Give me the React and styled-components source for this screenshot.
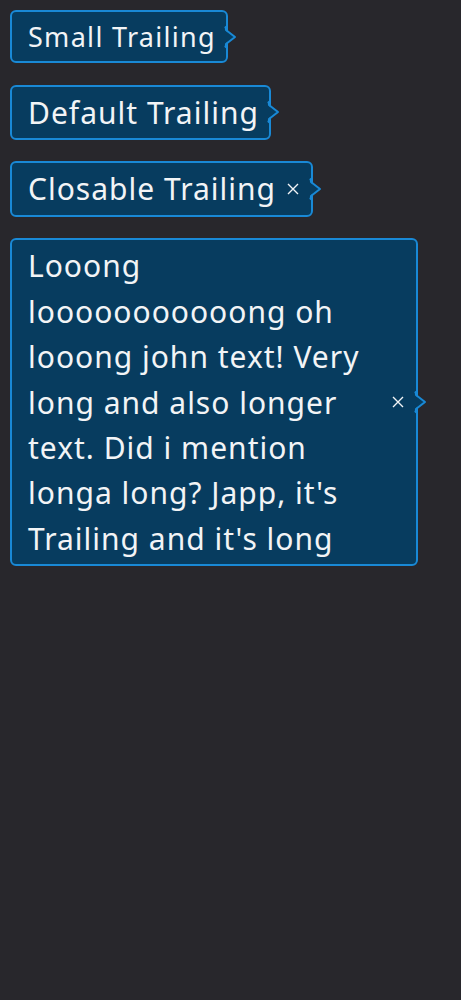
import styled, {createGlobalStyle} from 'styled-components'

const GlobalStyle = createGlobalStyle`
  html, body {
    margin: 0;
    padding: 0;
    background: #28272c;
  }
  body {
    font-family: 'Noto Sans', 'Open Sans', sans-serif;
    color: #f2f4f6;
  }
`

const Page = styled.main`
  min-height: 1000px;
  padding: 10px;
  display: flex;
  flex-direction: column;
  align-items: flex-start;
  gap: 21.5px;
  box-sizing: border-box;
`

const Tag = styled.div`
  position: relative;
  display: inline-flex;
  align-items: center;
  gap: 9px;
  max-width: 408px;
  box-sizing: border-box;
  padding: ${({$small}) => ($small ? '5px 10px 5px 16px' : '3px 10px 3px 16px')};
  font-size: ${({$small}) => ($small ? '27px' : '30px')};
  line-height: ${({$small}) => ($small ? '39px' : '45.4px')};
  letter-spacing: ${({$small}) => ($small ? '1.3px' : '1px')};
  background: #073c5f;
  border: 2px solid #1989d6;
  border-radius: 6px;
`

const Label = styled.span`
  flex: 1 1 auto;
  min-width: 0;
`

const CloseButton = styled.button`
  flex: 0 0 16px;
  width: 16px;
  height: 16px;
  padding: 0;
  border: none;
  background: none;
  color: #f2f4f6;
  display: flex;
  align-items: center;
  justify-content: center;
  cursor: pointer;
`

const Arrow = styled.svg`
  position: absolute;
  left: calc(100% - 2px);
  top: 50%;
  transform: translateY(-50%);
  overflow: visible;
`

const TrailingArrow = () => (
  <Arrow width="14" height="24" viewBox="0 0 14 24">
    <path d="M0 1 L2 2 L2 6 L11 12 L2 18 L2 22 L0 23 Z" fill="#073c5f" />
    <path d="M1 1.5 Q2 2.5 2 5 L11 12 L2 19 Q2 21.5 1 22.5" fill="none" stroke="#1989d6" strokeWidth="2" strokeLinejoin="round" />
  </Arrow>
)

const CloseIcon = () => (
  <svg width="12" height="12" viewBox="0 0 12 12">
    <path d="M1 1 L11 11 M11 1 L1 11" stroke="currentColor" strokeWidth="1.4" />
  </svg>
)

const TrailingTag = ({small, closable, children}) => (
  <Tag $small={small}>
    <Label>{children}</Label>
    {closable && (
      <CloseButton type="button" aria-label="close">
        <CloseIcon />
      </CloseButton>
    )}
    <TrailingArrow />
  </Tag>
)

const App = () => (
  <>
    <GlobalStyle />
    <Page>
      <TrailingTag small>Small Trailing</TrailingTag>
      <TrailingTag>Default Trailing</TrailingTag>
      <TrailingTag closable>Closable Trailing</TrailingTag>
      <TrailingTag closable>
        Looong looooooooooong oh looong john text! Very long and also longer text. Did i mention longa long? Japp, it's Trailing and it's long
      </TrailingTag>
    </Page>
  </>
)

export default App
